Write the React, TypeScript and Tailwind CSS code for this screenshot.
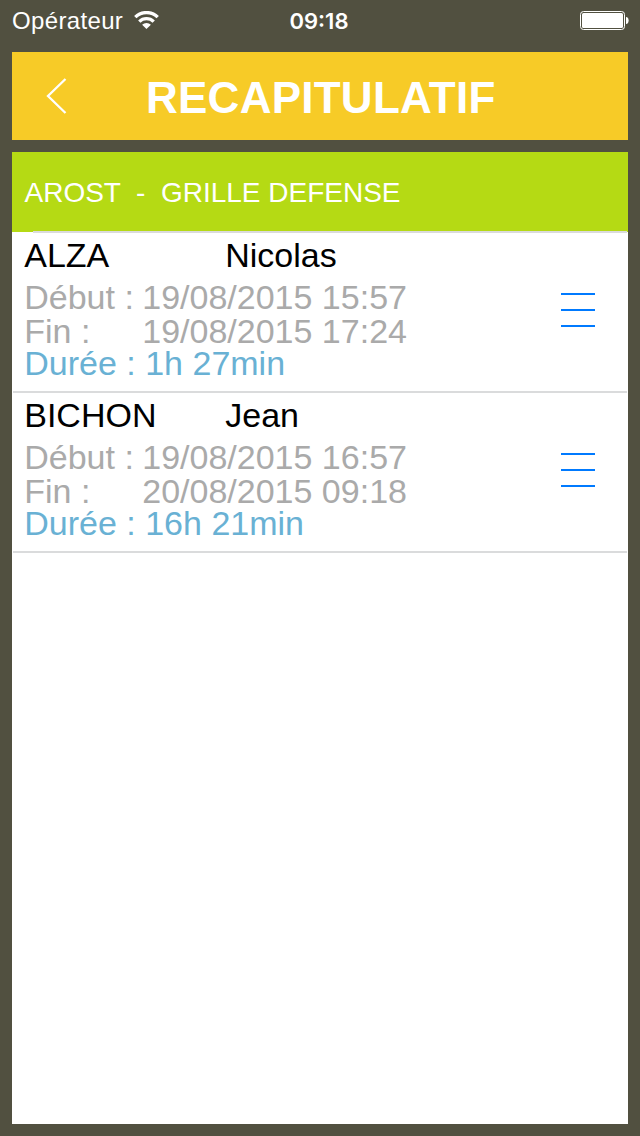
import React from "react";

const rows = [
  { last: "ALZA", first: "Nicolas", start: "19/08/2015 15:57", end: "19/08/2015 17:24", duration: "1h 27min" },
  { last: "BICHON", first: "Jean", start: "19/08/2015 16:57", end: "20/08/2015 09:18", duration: "16h 21min" },
];

function Row({ row }: { row: (typeof rows)[number] }) {
  return (
    <li className="mx-px flex h-[160px] justify-between border-b-2 border-[#dadbdc] pl-[11.25px] pr-8">
      <div className="whitespace-nowrap text-[34px] leading-[34px] text-[#aaaaaa]">
        <div className="flex pt-[5px] text-black">
          <span className="w-[201px]">{row.last}</span>
          <span>{row.first}</span>
        </div>
        <div className="flex pt-2">
          <span className="w-[118px]">Début :</span>
          <span>{row.start}</span>
        </div>
        <div className="flex">
          <span className="w-[118px]">Fin :</span>
          <span>{row.end}</span>
        </div>
        <div className="-mt-[2px] text-[#69b1d4]">Durée : {row.duration}</div>
      </div>
      <button className="flex w-[34px] flex-col gap-[14px] pt-[60px]" aria-label="Menu">
        <span className="h-0.5 w-full bg-[#007aff]" />
        <span className="h-0.5 w-full bg-[#007aff]" />
        <span className="h-0.5 w-full bg-[#007aff]" />
      </button>
    </li>
  );
}

export default function App() {
  return (
    <div className="flex h-[1136px] w-[640px] flex-col bg-[#515040] px-3 pb-3 font-['Liberation_Sans',Arial,sans-serif]">
      <div className="grid h-[52px] grid-cols-3 text-white">
        <div className="flex pt-[7px] text-[24px] leading-[28px] tracking-[0.35px]">
          <span className="w-[122px]">Opérateur</span>
          <svg className="mt-1 shrink-0" width="25" height="18" viewBox="0 0 25 18" fill="none" stroke="white" strokeWidth="3.3">
            <path d="M1.3 6.2a15.8 15.8 0 0 1 22.4 0M5.3 10.6a10.2 10.2 0 0 1 14.4 0" />
            <path d="M12.5 18l-4.4-4.2a6.2 6.2 0 0 1 8.8 0z" fill="white" stroke="none" />
          </svg>
        </div>
        <div className="-ml-[2px] pt-[7px] text-center font-['Inter',sans-serif] text-[22px] font-semibold leading-[28px]">09:18</div>
        <div className="-mr-[1px] flex justify-end pt-[11px]">
          <svg width="49" height="19" viewBox="0 0 49 19">
            <rect x="0.5" y="0.5" width="44" height="18" rx="3" fill="none" stroke="white" />
            <rect x="2" y="2" width="41" height="15" rx="1.5" fill="white" />
            <path d="M46 6c3.5 0 3.5 7 0 7z" fill="white" />
          </svg>
        </div>
      </div>
      <header className="flex h-[88px] shrink-0 items-center bg-[#f7cb27] text-white">
        <svg className="ml-[34px]" width="22" height="38" viewBox="0 0 22 38" fill="none" stroke="white" strokeWidth="2.3">
          <path d="M19.5 2L2 19l17.5 17" />
        </svg>
        <h1 className="ml-[78px] pt-1 text-[44px] font-bold leading-none tracking-[0.25px]">RECAPITULATIF</h1>
      </header>
      <main className="mt-3 flex-1 bg-white">
        <h2 className="h-[79px] whitespace-pre bg-[#b5da14] pl-[12.5px] pt-[25px] text-[28px] leading-[32px] text-white">AROST  -  GRILLE DEFENSE</h2>
        <div className="flex h-0.5">
          <span className="h-px w-[21px] bg-[#b5da14]" />
          <span className="flex-1 bg-[#dadbdc]" />
          <span className="h-px w-px bg-[#b5da14]" />
        </div>
        <ul>
          {rows.map((row) => (
            <Row key={row.last} row={row} />
          ))}
        </ul>
      </main>
    </div>
  );
}
